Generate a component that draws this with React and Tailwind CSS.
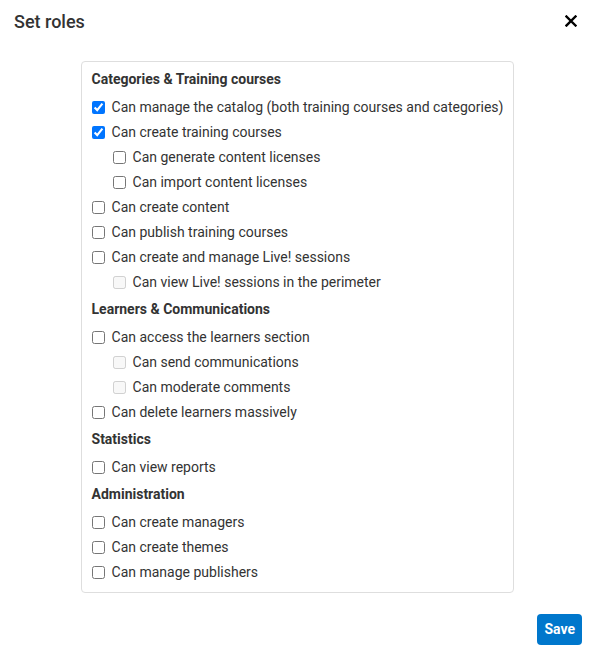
const sections = [
  {
    title: 'Categories & Training courses',
    items: [
      { label: 'Can manage the catalog (both training courses and categories)', checked: true },
      { label: 'Can create training courses', checked: true },
      { label: 'Can generate content licenses', sub: true },
      { label: 'Can import content licenses', sub: true },
      { label: 'Can create content' },
      { label: 'Can publish training courses' },
      { label: 'Can create and manage Live! sessions' },
      { label: 'Can view Live! sessions in the perimeter', sub: true, disabled: true },
    ],
  },
  {
    title: 'Learners & Communications',
    items: [
      { label: 'Can access the learners section' },
      { label: 'Can send communications', sub: true, disabled: true },
      { label: 'Can moderate comments', sub: true, disabled: true },
      { label: 'Can delete learners massively' },
    ],
  },
  {
    title: 'Statistics',
    items: [{ label: 'Can view reports' }],
  },
  {
    title: 'Administration',
    items: [
      { label: 'Can create managers' },
      { label: 'Can create themes' },
      { label: 'Can manage publishers' },
    ],
  },
];

function RoleRow({ item }) {
  return (
    <label className={`flex h-[25px] items-center ${item.sub ? 'pl-[21px]' : ''}`}>
      <input
        type="checkbox"
        defaultChecked={item.checked}
        disabled={item.disabled}
        className="m-0 h-[13px] w-[13px] shrink-0"
      />
      <span className="ml-[7px] whitespace-nowrap text-[14px] leading-[17px] text-[#333]">{item.label}</span>
    </label>
  );
}

export default function App() {
  return (
    <div className="min-h-[657px] w-[594px] bg-white" style={{ fontFamily: 'Roboto, "Liberation Sans", sans-serif' }}>
      {/* Header */}
      <div className="flex h-[42px] items-center justify-between px-[14px]">
        <h1 className="text-[18px] font-medium text-[#333]">Set roles</h1>
        <button className="mr-[3px] flex h-3 w-3 items-center justify-center">
          <svg width="12" height="12" viewBox="0 0 12 12">
            <path d="M1.5 1.5 10.5 10.5 M10.5 1.5 1.5 10.5" stroke="#000" strokeWidth="2.4" strokeLinecap="square" />
          </svg>
        </button>
      </div>

      {/* Roles box */}
      <div className="mt-[19px] flex justify-center pl-[1px]">
        <div className="rounded-[4px] border border-[#dedede] px-[10px] pt-[3px] pb-[7px]">
          {sections.map((section) => (
            <div key={section.title}>
              <div className="pt-[6px] pb-[7px] text-[14px] font-bold leading-[17px] text-[#333]">{section.title}</div>
              {section.items.map((item) => (
                <RoleRow key={item.label} item={item} />
              ))}
            </div>
          ))}
        </div>
      </div>

      {/* Footer */}
      <div className="mt-[21px] flex justify-end px-[12px]">
        <button className="h-[31px] rounded-[4px] bg-[#0077cc] px-[7px] text-[14px] font-bold text-white">Save</button>
      </div>
    </div>
  );
}
